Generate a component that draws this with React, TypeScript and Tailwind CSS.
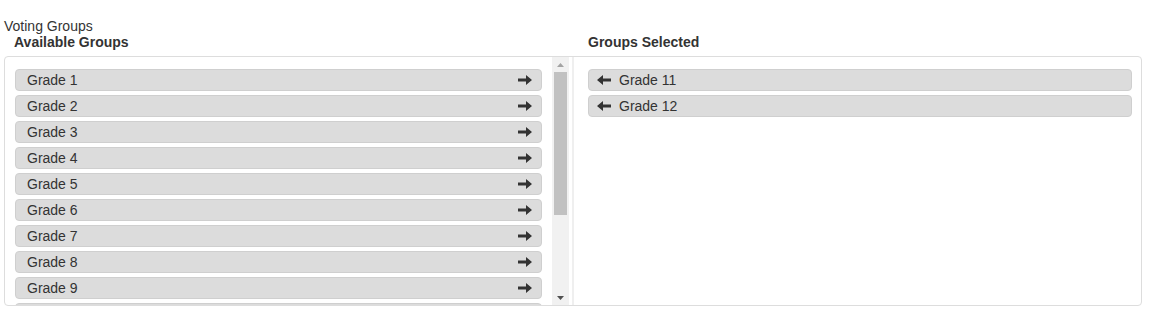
import React from "react";

const ArrowRight = () => (
  <svg width="14" height="12" viewBox="0 0 14 12" className="block">
    <path d="M0 4.6h8V1l6 5-6 5V7.4H0z" fill="#333" />
  </svg>
);
const ArrowLeft = () => (
  <svg width="14" height="12" viewBox="0 0 14 12" className="block">
    <path d="M14 4.6H6V1L0 6l6 5V7.4h8z" fill="#333" />
  </svg>
);

const available = ["Grade 1", "Grade 2", "Grade 3", "Grade 4", "Grade 5", "Grade 6", "Grade 7", "Grade 8", "Grade 9", "Grade 10"];
const selected = ["Grade 11", "Grade 12"];

export default function App() {
  return (
    <div className="bg-white w-[1152px] h-[316px] pt-[18px] pl-[4px] text-[#333]" style={{ fontFamily: '"Liberation Sans", Arial, sans-serif' }}>
      <div className="text-[14px] leading-[16px]">Voting Groups</div>
      <div className="flex text-[14px] leading-[16px] font-bold pb-[6px]">
        <div className="w-[584px] pl-[10px]">Available Groups</div>
        <div className="pl-0">Groups Selected</div>
      </div>
      <div className="flex w-[1138px] h-[250px] border border-[#ddd] rounded-[4px] overflow-hidden">
        <div className="flex w-[564px] flex-none">
          <div className="flex-1 overflow-hidden pl-[10px] pr-[10px] pt-[12px] flex flex-col gap-[4px]">
            {available.map((g) => (
              <div key={g} className="flex-none h-[22px] flex items-center justify-between bg-[#dcdcdc] border border-[#cfcfcf] rounded-[4px] pl-[11px] pr-[9px] text-[14px]">
                <span>{g}</span>
                <ArrowRight />
              </div>
            ))}
          </div>
          <div className="w-[17px] flex-none bg-[#f1f1f1] flex flex-col items-center">
            <div className="h-[15px] flex items-center justify-center">
              <svg width="7" height="4" viewBox="0 0 7 4"><path d="M0 4L3.5 0 7 4z" fill="#a3a3a3" /></svg>
            </div>
            <div className="w-[13px] h-[143px] bg-[#c1c1c1]" />
            <div className="flex-1" />
            <div className="h-[15px] flex items-center justify-center">
              <svg width="7" height="4" viewBox="0 0 7 4"><path d="M0 0h7L3.5 4z" fill="#505050" /></svg>
            </div>
          </div>
        </div>
        <div className="w-[3px] flex-none" />
        <div className="w-[2px] flex-none bg-[#efefef]" />
        <div className="flex-1 pl-[14px] pr-[9px] pt-[12px] flex flex-col gap-[4px]">
          {selected.map((g) => (
            <div key={g} className="flex-none h-[22px] flex items-center bg-[#dcdcdc] border border-[#cfcfcf] rounded-[4px] pl-[8px] gap-[8px] text-[14px]">
              <ArrowLeft />
              <span>{g}</span>
            </div>
          ))}
        </div>
      </div>
    </div>
  );
}
